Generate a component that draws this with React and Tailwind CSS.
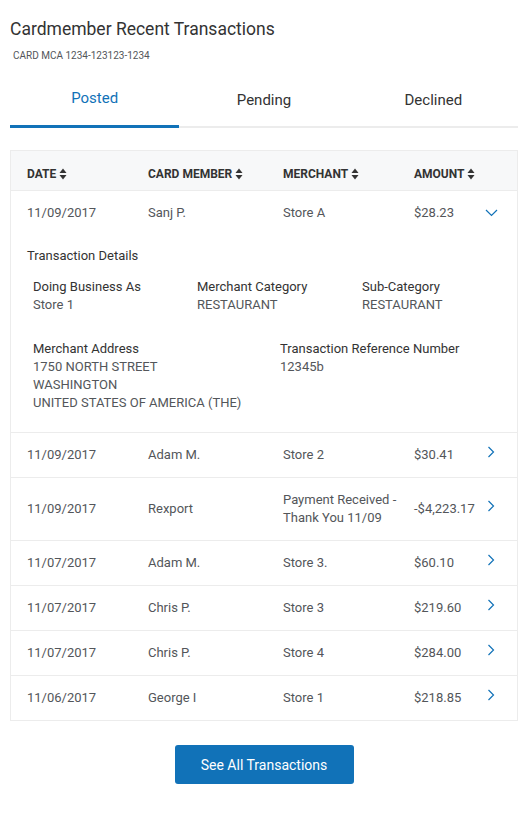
import React from "react";

const rows = [
  { date: "11/09/2017", member: "Adam M.", merchant: "Store 2", amount: "$30.41" },
  { date: "11/09/2017", member: "Rexport", merchant: "Payment Received - Thank You 11/09", amount: "-$4,223.17" },
  { date: "11/07/2017", member: "Adam M.", merchant: "Store 3.", amount: "$60.10" },
  { date: "11/07/2017", member: "Chris P.", merchant: "Store 3", amount: "$219.60" },
  { date: "11/07/2017", member: "Chris P.", merchant: "Store 4", amount: "$284.00" },
  { date: "11/06/2017", member: "George I", merchant: "Store 1", amount: "$218.85" },
];

const SortIcon = () => (
  <svg width="8" height="12" viewBox="0 0 8 12" className="ml-[3px] inline-block">
    <path d="M4 0.5 L7.5 5 L0.5 5 Z" fill="#333" />
    <path d="M4 11.5 L7.5 7 L0.5 7 Z" fill="#333" />
  </svg>
);

const ChevronRight = () => (
  <svg width="8" height="12" viewBox="0 0 8 12">
    <path d="M1.5 1 L6.5 6 L1.5 11" fill="none" stroke="#1172b8" strokeWidth="1.2" />
  </svg>
);

const ChevronDown = () => (
  <svg width="13" height="8" viewBox="0 0 13 8">
    <path d="M1 1 L6.5 6.5 L12 1" fill="none" stroke="#1172b8" strokeWidth="1.2" />
  </svg>
);

const cols = "grid grid-cols-[121px_135px_131px_72px_1fr] items-center";

const Detail = ({ label, children }) => (
  <div>
    <div className="text-[#333]">{label}</div>
    <div className="text-[#53565a]">{children}</div>
  </div>
);

export default function App() {
  return (
    <div className="bg-white min-h-screen pl-[10px] pr-[13px] pt-[18px] pb-8 text-[13px] leading-[18px]" style={{ fontFamily: 'Roboto, "Liberation Sans", Arial, sans-serif' }}>
      <h1 className="text-[17.5px] leading-[22px] text-[#333]">Cardmember Recent Transactions</h1>
      <p className="text-[10px] text-[#53565a] mt-[7px] ml-[3px]">CARD MCA 1234-123123-1234</p>

      {/* Tabs */}
      <div className="mt-[22px] grid grid-cols-3 border-b-2 border-[#ececec] text-[15px]">
        <div className="text-center text-[#1172b8] pt-[2px] pb-[18px] border-b-[3px] border-[#1172b8] -mb-[2px]">Posted</div>
        <div className="text-center text-[#333] pt-[4px] pb-[16px]">Pending</div>
        <div className="text-center text-[#333] pt-[4px] pb-[16px]">Declined</div>
      </div>

      {/* Table */}
      <div className="mt-[22px] border border-[#ececec]">
        <div className={`${cols} bg-[#f7f8f9] h-[40px] pl-[16px] pt-[6px] border-b border-[#ececec] text-[12px] font-bold text-[#333]`}>
          <div className="flex items-center">DATE<SortIcon /></div>
          <div className="flex items-center">CARD MEMBER<SortIcon /></div>
          <div className="flex items-center">MERCHANT<SortIcon /></div>
          <div className="flex items-center">AMOUNT<SortIcon /></div>
        </div>

        {/* Expanded row */}
        <div className="border-b border-[#ececec]">
          <div className={`${cols} h-[42px] pl-[16px] pt-[1px] text-[#53565a]`}>
            <div>11/09/2017</div>
            <div>Sanj P.</div>
            <div>Store A</div>
            <div>$28.23</div>
            <div className="flex -ml-[1px]"><ChevronDown /></div>
          </div>
          <div className="pl-[16px] pt-[14px] pb-[20px]">
            <div className="text-[#333]">Transaction Details</div>
            <div className="pl-[6px] mt-[13px] grid grid-cols-[164px_165px_1fr]">
              <Detail label="Doing Business As">Store 1</Detail>
              <Detail label="Merchant Category">RESTAURANT</Detail>
              <Detail label="Sub-Category">RESTAURANT</Detail>
            </div>
            <div className="pl-[6px] mt-[26px] grid grid-cols-[247px_1fr]">
              <Detail label="Merchant Address">
                1750 NORTH STREET<br />WASHINGTON<br />UNITED STATES OF AMERICA (THE)
              </Detail>
              <Detail label="Transaction Reference Number">12345b</Detail>
            </div>
          </div>
        </div>

        {rows.map((r, i) => (
          <div key={i} className={`${cols} py-[13px] pl-[16px] text-[#53565a] ${i < rows.length - 1 ? "border-b border-[#ececec]" : ""}`}>
            <div>{r.date}</div>
            <div>{r.member}</div>
            <div className="pr-[10px]">{r.merchant}</div>
            <div className="whitespace-nowrap">{r.amount}</div>
            <div className="flex pl-[1px] -mt-[6px]"><ChevronRight /></div>
          </div>
        ))}
      </div>

      <div className="flex justify-center mt-[24px]">
        <button className="w-[179px] h-[39px] rounded-[3px] bg-[#1172b8] text-white text-[14px]">See All Transactions</button>
      </div>
    </div>
  );
}
